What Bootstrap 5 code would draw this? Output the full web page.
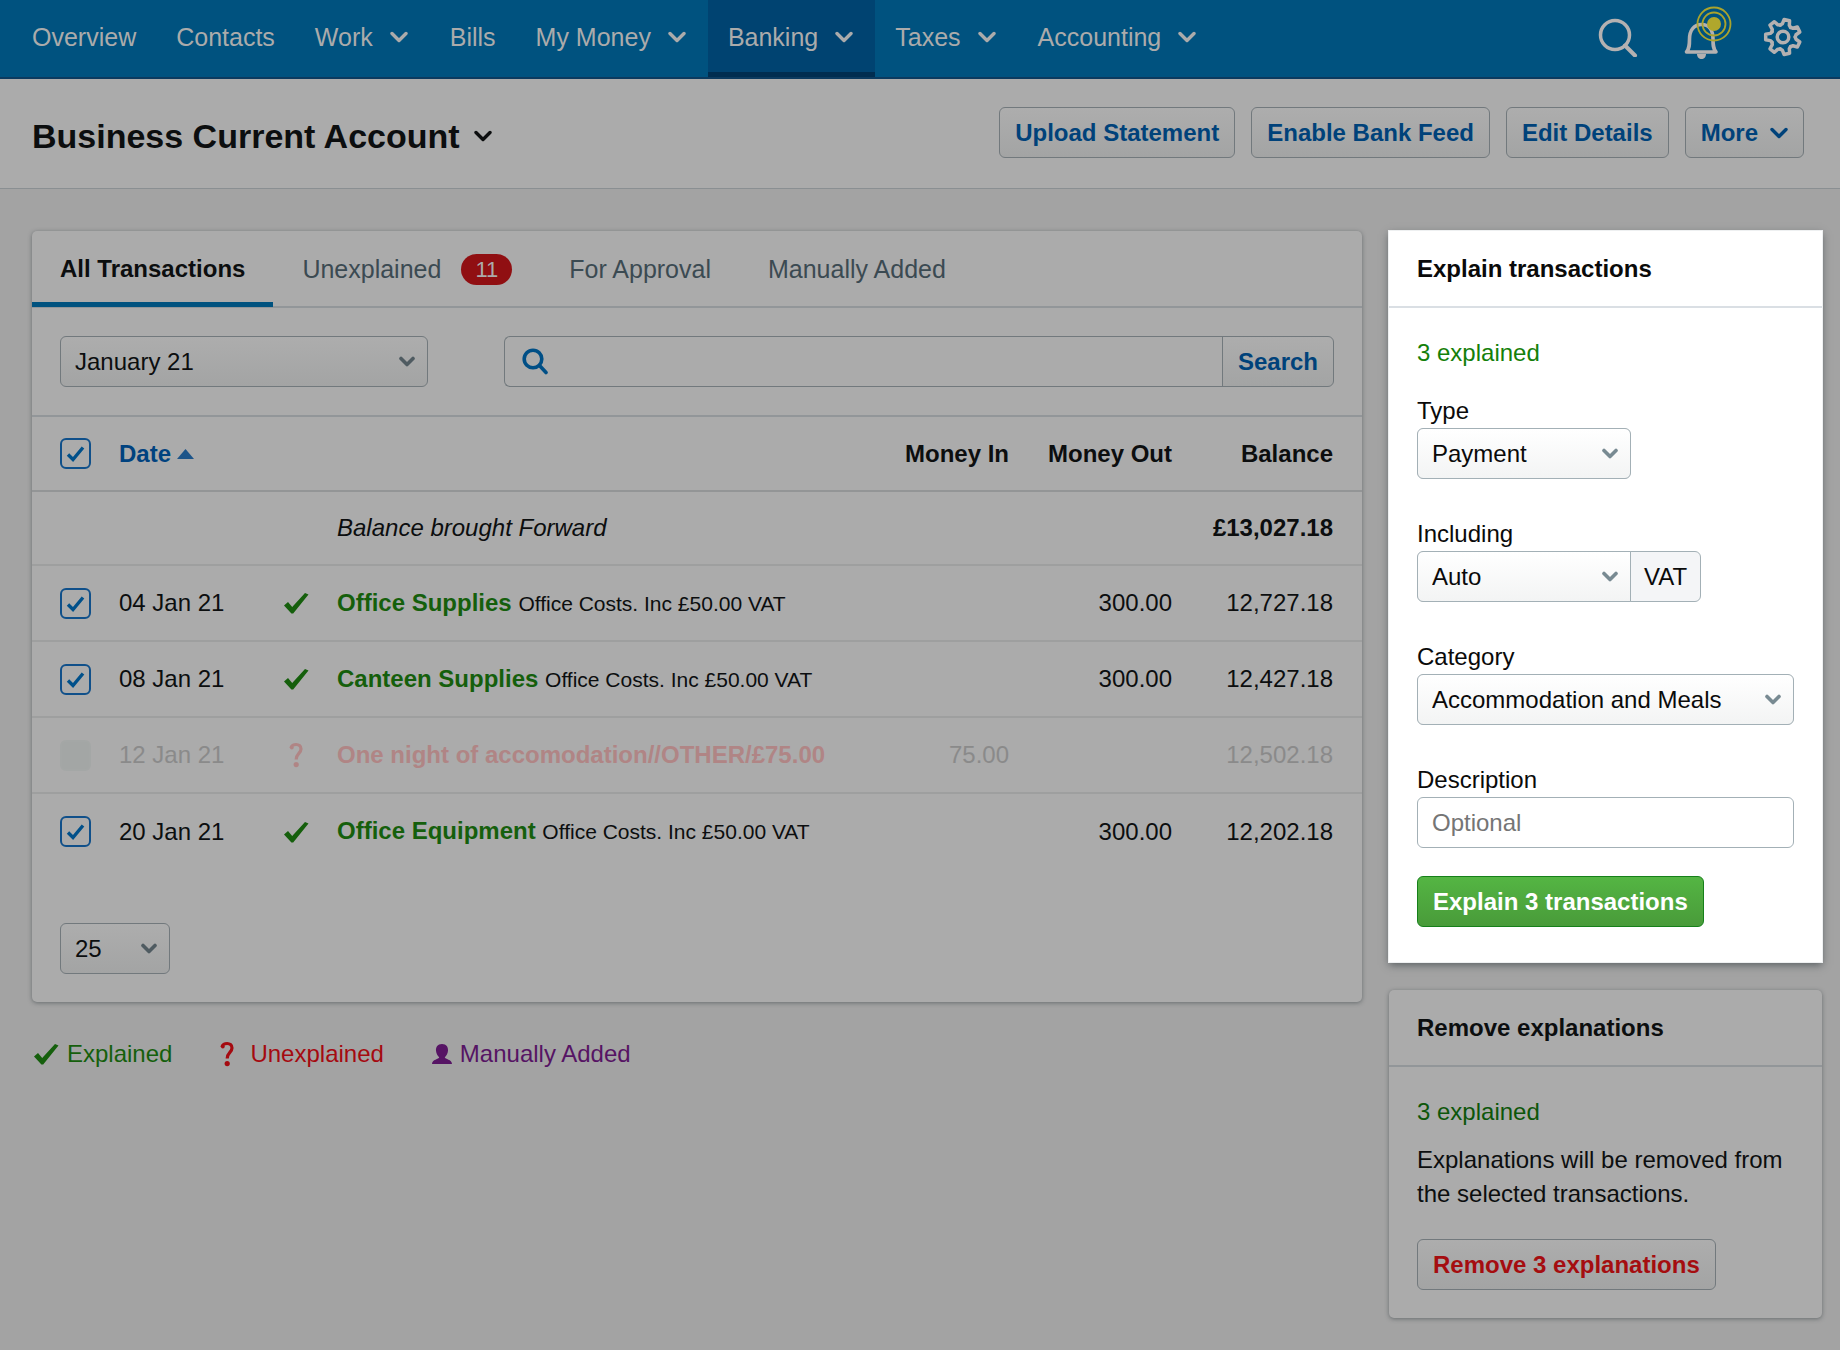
<!DOCTYPE html>
<html lang="en">
<head>
<meta charset="utf-8">
<meta name="viewport" content="width=device-width, initial-scale=1">
<title>Business Current Account</title>
<link rel="stylesheet" href="https://cdn.jsdelivr.net/npm/bootstrap@5.3.0/dist/css/bootstrap.min.css">
<style>
:root{--ink:#0c0e0f;--panel:#ababab;--page:#a3a3a3;--line:#929699;--edge:#72797d;--blue:#00427a;--red:#a50d10;--green:#155f0c}
body{font-family:"Liberation Sans",Arial,sans-serif;font-size:24px;line-height:34px;color:var(--ink);background:var(--page);min-height:100vh}
a{text-decoration:none}
svg{display:block;flex:none}
.topbar{background:#00527f;border-bottom:2px solid #0b3a5f;padding:0 37px 0 12px}
.topbar .nav-link{height:77px;padding:0 20px 3px;font-size:25px;color:#ababab;display:flex;align-items:center;gap:17px}
.topbar .dropdown-link{padding-right:22px}
.topbar .nav-link.active{background:#004371;box-shadow:inset 0 -5px #002d50}
.topicons{padding-bottom:4px}
.iconbtn{background:none;border:0;padding:0;color:#b4b1b1}
.bellbtn{margin:0 30px 0 45px}
.pagehead{background:var(--panel);border-bottom:1px solid #8a8f92;padding:28px 36px 30px 32px}
.pagehead h1{font-size:34px;line-height:44px;font-weight:700}
.titlebtn{background:none;border:0;padding:0;color:inherit;font:inherit;display:flex;align-items:center;gap:14px}
.btn{font-size:24px;line-height:33px;font-weight:700;padding:8px 15px;border-radius:6px;white-space:nowrap}
.btn-soft{color:var(--blue);border-color:var(--edge);background:linear-gradient(#adadad,#a3a4a4)}
.btn-soft:hover{color:var(--blue);border-color:var(--edge)}
.btn-remove,.btn-remove:hover{color:var(--red)}
.btn-explain{color:#fff;border-color:#16801a;background:linear-gradient(#54b543,#499b3a)}
.workspace{padding:42px 18px 28px 32px;gap:27px}
.sidecol{width:433px;flex:none;gap:28px}
.panel{background:var(--panel);border-radius:5px;box-shadow:0 1px 4px rgba(45,55,60,.5)}
.panelhead{height:77px;border-bottom:2px solid var(--line)}
.panelhead h2{font-size:24px;line-height:34px;font-weight:700;margin:0;padding:21px 28px}
.panelbody{padding:28px}
.spot{background:#fff;color:#0a0a0a;border-radius:0;box-shadow:0 0 0 1px #eef0f1,0 3px 8px rgba(30,40,45,.55)}
.spot .panelhead{border-color:#dadfe4}
.spot .panelbody{padding-bottom:35px}
.tabline{gap:1px}
.tabline .nav-link{color:#3b4a52;font-size:25px;padding:0 28px;height:76px;display:flex;align-items:center;gap:20px}
.tabline .nav-link.active{color:var(--ink);font-size:24px;font-weight:700;box-shadow:inset 0 -5px #00527f}
.countpill{background:#900f12;color:#ababab;font-size:22px;line-height:31px;padding:0 14px;border-radius:16px}
.filters{padding:28px;border-bottom:2px solid var(--line);gap:76px}
.form-select,.form-control,.input-group-text{font-size:24px;line-height:33px;color:var(--ink);height:51px;padding:8px 14px;border-color:var(--edge);border-radius:6px;background-color:var(--panel)}
.form-select{background-image:url("data:image/svg+xml,%3Csvg xmlns='http://www.w3.org/2000/svg' viewBox='0 0 16 11'%3E%3Cpath d='M2 2.5l6 6 6-6' fill='none' stroke='%234f5b61' stroke-width='3.6' stroke-linecap='round' stroke-linejoin='round'/%3E%3C/svg%3E"),linear-gradient(#adadad,#a3a4a4);background-position:right 12px center,0 0;background-size:16px 11px,100% 100%;padding-right:36px}
.spot .form-select{color:#0a0a0a;border-color:#a3b0b6;background-image:url("data:image/svg+xml,%3Csvg xmlns='http://www.w3.org/2000/svg' viewBox='0 0 16 11'%3E%3Cpath d='M2 2.5l6 6 6-6' fill='none' stroke='%23788a92' stroke-width='3.6' stroke-linecap='round' stroke-linejoin='round'/%3E%3C/svg%3E"),linear-gradient(#fff,#f3f4f4)}
.spot .form-control{background:#fff;border-color:#a3b0b6}
.spot .form-control::placeholder{color:#757575}
.spot .input-group-text{background:#f4f5f7;border-color:#a3b0b6;color:#0a0a0a;padding:8px 13px}
.field{margin-bottom:38px}
.field label{display:block}
.lastfield{margin-bottom:28px}
.w-month{width:368px;flex:none}
.w-page{width:110px}
.w-type,.input-group>.w-type{width:214px;flex:none}
.searchicon{border-right:0;padding-left:17px;color:#004f86}
.searchbox{border-left:0}
.ledger{width:100%;table-layout:fixed;margin:0}
.ledger th,.ledger td{height:76px;padding:0;vertical-align:middle;border-bottom:2px solid #9e9f9f;white-space:nowrap}
.ledger thead th{height:74px;border-bottom-color:#939596}
.ledger .opening td{height:74px}
.ledger tbody tr:last-child td{border-bottom:0}
.ledger .pick{padding-left:28px}
.ledger .lastcol{padding-right:29px}
.c-pick{width:87px}.c-date{width:164px}.c-icon{width:54px}.c-in{width:120px}.c-out{width:163px}.c-bal{width:190px}
.ledger .form-check-input{display:block;width:31px;height:31px;margin:0;border:2px solid #10508a;border-radius:6px;background-color:transparent}
.ledger .form-check-input:checked{background-image:url("data:image/svg+xml,%3Csvg xmlns='http://www.w3.org/2000/svg' viewBox='0 0 27 27'%3E%3Cpath d='M6 14.5l5 5L21 7.5' fill='none' stroke='%2300508a' stroke-width='3.4'/%3E%3C/svg%3E");background-size:27px 27px}
.ledger .form-check-input:disabled{border-color:#a4a7a6;background-color:#a3a6a5;opacity:1}
.sortlink{color:#00427f;display:flex;align-items:center;gap:6px}
.payee{color:var(--green);font-weight:700}
.note{font-size:21px}
.faded td{color:#8a8a8a}
.faded .payee,.faded .st-no{color:#b08585}
.st-ok{color:var(--green)}.st-no{color:#a50a10}.st-me{color:#561464}
.pager{padding:54px 28px 28px}
.legend{gap:48px;padding:35px 1px 0}
.ok{color:#14800a}.okdim{color:#0d560a;margin-bottom:14px}
.explainer{margin-bottom:28px}
</style>
<script defer src="https://cdn.jsdelivr.net/npm/bootstrap@5.3.0/dist/js/bootstrap.bundle.min.js"></script>
</head>
<body>
<svg width="0" height="0" class="position-absolute" aria-hidden="true">
  <symbol id="chev" viewBox="0 0 18 12"><path d="M2 2.5l7 7 7-7" fill="none" stroke="currentColor" stroke-width="3.4" stroke-linecap="round" stroke-linejoin="round"/></symbol>
  <symbol id="tick" viewBox="0 0 26 22"><path d="M1 13.5l4-3.400 4.200 5L22 1l3.500 1.500L10.200 21.500H8.400z" fill="currentColor"/></symbol>
  <symbol id="query" viewBox="0 0 14 26"><path d="M2 6C2.500 1.500 12 .800 12 7c0 4.500-4.800 4.500-4.800 10.500" fill="none" stroke="currentColor" stroke-width="3.200"/><circle cx="2.800" cy="5.500" r="1.900" fill="currentColor"/><circle cx="7.200" cy="22.600" r="2.600" fill="currentColor"/></symbol>
  <symbol id="person" viewBox="0 0 20 20"><path d="M10 0c4.500 0 6.300 3 6 6.800-.3 3-1.500 5-3.200 6.400.2 2.300 7.200 1.800 7.200 6.800H0c0-5 7-4.500 7.200-6.800C5.500 11.800 4.300 9.800 4 6.800 3.700 3 5.500 0 10 0z" fill="currentColor"/></symbol>
  <symbol id="cog" viewBox="0 0 40 40"><g fill="none" stroke="currentColor" stroke-width="3.500" stroke-linecap="round" stroke-linejoin="round"><circle cx="20" cy="20" r="5.800"/><g transform="translate(20 20)"><path id="tooth" d="M-11 5.300L-12.700 3.600-17.300 2.800V-2.800L-12.700-3.600-11-5.300"/><use href="#tooth" transform="rotate(51.430)"/><use href="#tooth" transform="rotate(102.860)"/><use href="#tooth" transform="rotate(154.290)"/><use href="#tooth" transform="rotate(205.710)"/><use href="#tooth" transform="rotate(257.140)"/><use href="#tooth" transform="rotate(308.570)"/></g></g></symbol>
</svg>

<header class="topbar d-flex justify-content-between align-items-center">
  <nav class="nav flex-nowrap" aria-label="Main">
    <a class="nav-link" href="#">Overview</a>
    <a class="nav-link" href="#">Contacts</a>
    <a class="nav-link dropdown-link" href="#">Work <svg width="18" height="12"><use href="#chev"/></svg></a>
    <a class="nav-link" href="#">Bills</a>
    <a class="nav-link dropdown-link" href="#">My Money <svg width="18" height="12"><use href="#chev"/></svg></a>
    <a class="nav-link dropdown-link active" aria-current="page" href="#">Banking <svg width="18" height="12"><use href="#chev"/></svg></a>
    <a class="nav-link dropdown-link" href="#">Taxes <svg width="18" height="12"><use href="#chev"/></svg></a>
    <a class="nav-link dropdown-link" href="#">Accounting <svg width="18" height="12"><use href="#chev"/></svg></a>
  </nav>
  <div class="topicons d-flex align-items-center">
    <button class="iconbtn" type="button" aria-label="Search"><svg width="40" height="40" viewBox="0 0 40 40" fill="none" stroke="currentColor" stroke-width="3.500"><circle cx="17" cy="18" r="14.500"/><path d="M27 28.500l10 10" stroke-width="4" stroke-linecap="round"/></svg></button>
    <button class="iconbtn bellbtn" type="button" aria-label="Notifications"><svg width="50" height="62" viewBox="0 0 50 62"><path d="M3.500 46c3-3.500 3-7 3-13 0-8 4-14.500 12-14.500S30 25 30 33c0 6 0 9.500 3 13z" fill="none" stroke="currentColor" stroke-width="3.600" stroke-linejoin="round"/><path d="M14 48h9c0 3-2 5-4.500 5S14 51 14 48z" fill="currentColor"/><g stroke="#aaa32c" fill="none" stroke-width="1.800"><circle cx="31" cy="18" r="16.500"/><circle cx="31" cy="18" r="11.500"/></g><circle cx="31" cy="18" r="7" fill="#b0a72c"/></svg></button>
    <button class="iconbtn" type="button" aria-label="Settings"><svg width="40" height="40"><use href="#cog"/></svg></button>
  </div>
</header>

<div class="pagehead d-flex justify-content-between align-items-end">
  <h1 class="m-0"><button class="titlebtn" type="button">Business Current Account <svg width="18" height="12"><use href="#chev"/></svg></button></h1>
  <div class="d-flex gap-3">
    <button class="btn btn-soft" type="button">Upload Statement</button>
    <button class="btn btn-soft" type="button">Enable Bank Feed</button>
    <button class="btn btn-soft" type="button">Edit Details</button>
    <button class="btn btn-soft d-flex align-items-center gap-2" type="button">More <svg class="ms-1" width="18" height="12"><use href="#chev"/></svg></button>
  </div>
</div>

<main class="workspace d-flex align-items-start">
  <div class="flex-grow-1">
    <section class="panel">
      <nav class="panelhead tabline nav flex-nowrap" aria-label="Transaction filters">
        <a class="nav-link active" href="#">All Transactions</a>
        <a class="nav-link" href="#">Unexplained <span class="countpill">11</span></a>
        <a class="nav-link" href="#">For Approval</a>
        <a class="nav-link" href="#">Manually Added</a>
      </nav>
      <form class="filters d-flex">
        <select class="form-select w-month" aria-label="Month"><option>January 21</option></select>
        <div class="input-group flex-nowrap">
          <label class="input-group-text searchicon" for="q"><svg width="26" height="27" viewBox="0 0 26 27" fill="none" stroke="currentColor" stroke-width="3.600" stroke-linecap="round" role="img" aria-label="Search"><circle cx="11" cy="11" r="8.800"/><path d="M17.500 17.500l6.500 7"/></svg></label>
          <input class="form-control searchbox" id="q" type="text">
          <button class="btn btn-soft" type="button">Search</button>
        </div>
      </form>
      <table class="ledger">
        <colgroup><col class="c-pick"><col class="c-date"><col class="c-icon"><col><col class="c-in"><col class="c-out"><col class="c-bal"></colgroup>
        <thead>
          <tr>
            <th class="pick"><input class="form-check-input" type="checkbox" aria-label="Select all" checked></th>
            <th><a class="sortlink" href="#">Date <svg width="17" height="10" viewBox="0 0 17 10"><path d="M8.500 0L17 10H0z" fill="#1c5489"/></svg></a></th>
            <th></th><th></th>
            <th class="text-end">Money In</th><th class="text-end">Money Out</th><th class="text-end lastcol">Balance</th>
          </tr>
        </thead>
        <tbody>
          <tr class="opening"><td></td><td></td><td></td><td class="fst-italic">Balance brought Forward</td><td></td><td></td><td class="text-end lastcol fw-bold">£13,027.18</td></tr>
          <tr>
            <td class="pick"><input class="form-check-input" type="checkbox" aria-label="Select 04 Jan 21" checked></td><td>04 Jan 21</td>
            <td class="st-ok"><svg width="26" height="22"><use href="#tick"/></svg></td>
            <td><a class="payee" href="#">Office Supplies</a> <span class="note">Office Costs. Inc £50.00 VAT</span></td>
            <td></td><td class="text-end">300.00</td><td class="text-end lastcol">12,727.18</td>
          </tr>
          <tr>
            <td class="pick"><input class="form-check-input" type="checkbox" aria-label="Select 08 Jan 21" checked></td><td>08 Jan 21</td>
            <td class="st-ok"><svg width="26" height="22"><use href="#tick"/></svg></td>
            <td><a class="payee" href="#">Canteen Supplies</a> <span class="note">Office Costs. Inc £50.00 VAT</span></td>
            <td></td><td class="text-end">300.00</td><td class="text-end lastcol">12,427.18</td>
          </tr>
          <tr class="faded">
            <td class="pick"><input class="form-check-input" type="checkbox" aria-label="Select 12 Jan 21" disabled></td><td>12 Jan 21</td>
            <td class="st-no"><svg width="26" height="26"><use href="#query"/></svg></td>
            <td><a class="payee" href="#">One night of accomodation//OTHER/£75.00</a></td>
            <td class="text-end">75.00</td><td></td><td class="text-end lastcol">12,502.18</td>
          </tr>
          <tr>
            <td class="pick"><input class="form-check-input" type="checkbox" aria-label="Select 20 Jan 21" checked></td><td>20 Jan 21</td>
            <td class="st-ok"><svg width="26" height="22"><use href="#tick"/></svg></td>
            <td><a class="payee" href="#">Office Equipment</a> <span class="note">Office Costs. Inc £50.00 VAT</span></td>
            <td></td><td class="text-end">300.00</td><td class="text-end lastcol">12,202.18</td>
          </tr>
        </tbody>
      </table>
      <div class="pager"><select class="form-select w-page" aria-label="Rows per page"><option>25</option></select></div>
    </section>
    <div class="legend d-flex">
      <span class="st-ok d-flex align-items-center gap-2"><svg width="26" height="22"><use href="#tick"/></svg>Explained</span>
      <span class="st-no d-flex align-items-center gap-3"><svg width="14" height="26"><use href="#query"/></svg>Unexplained</span>
      <span class="st-me d-flex align-items-center gap-2"><svg width="20" height="20"><use href="#person"/></svg>Manually Added</span>
    </div>
  </div>

  <aside class="sidecol d-flex flex-column">
    <section class="panel spot">
      <div class="panelhead"><h2>Explain transactions</h2></div>
      <form class="panelbody">
        <p class="ok mb-4">3 explained</p>
        <div class="field"><label for="type">Type</label><select class="form-select w-type" id="type"><option>Payment</option></select></div>
        <div class="field"><label for="vat">Including</label>
          <div class="input-group"><select class="form-select w-type" id="vat"><option>Auto</option></select><span class="input-group-text">VAT</span></div></div>
        <div class="field"><label for="cat">Category</label><select class="form-select" id="cat"><option>Accommodation and Meals</option></select></div>
        <div class="field lastfield"><label for="desc">Description</label><input class="form-control" id="desc" type="text" placeholder="Optional"></div>
        <button class="btn btn-explain" type="button">Explain 3 transactions</button>
      </form>
    </section>
    <section class="panel">
      <div class="panelhead"><h2>Remove explanations</h2></div>
      <div class="panelbody">
        <p class="okdim">3 explained</p>
        <p class="explainer">Explanations will be removed from the selected transactions.</p>
        <button class="btn btn-soft btn-remove" type="button">Remove 3 explanations</button>
      </div>
    </section>
  </aside>
</main>
</body>
</html>
